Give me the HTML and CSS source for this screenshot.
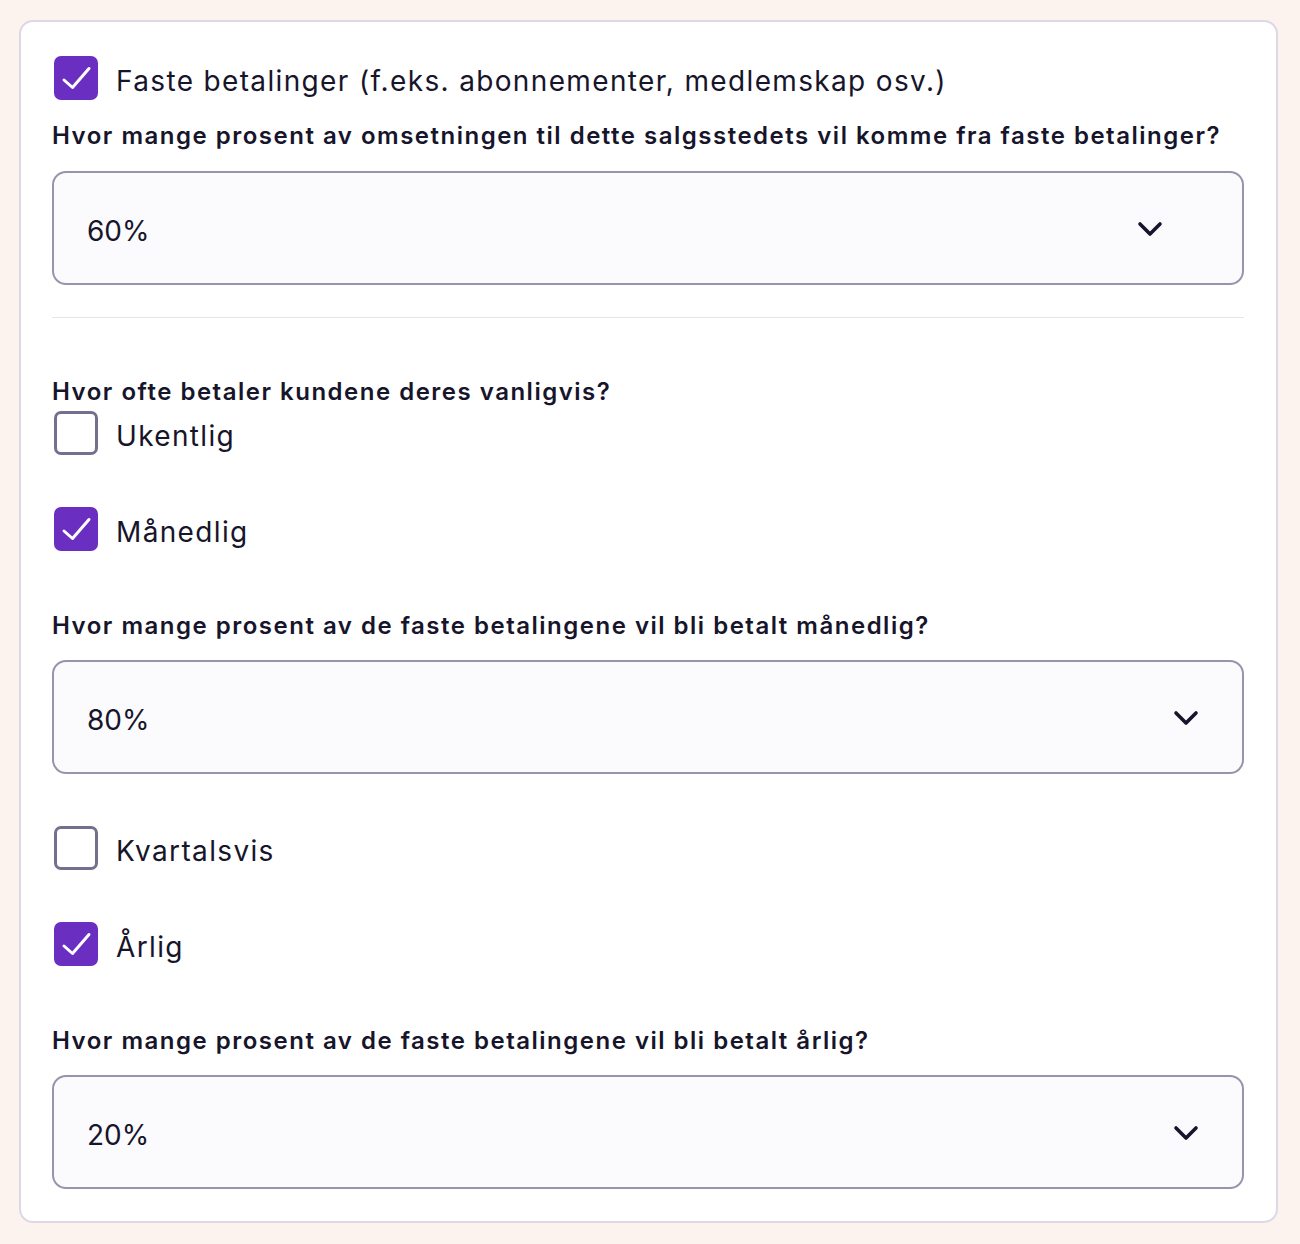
FILE: index.html
```html
<!DOCTYPE html>
<html lang="no">
<head>
<meta charset="utf-8">
<link rel="stylesheet" href="styles.css">
</head>
<body>
<div class="card">
  <label class="check-row">
    <span class="box checked"><svg viewBox="0 0 44 44" width="44" height="44"><path d="M10 24l8.5 7.5L35 12.5" fill="none" stroke="#fff" stroke-width="3" stroke-linecap="round" stroke-linejoin="round"/></svg></span>
    <span class="check-label">Faste betalinger (f.eks. abonnementer, medlemskap osv.)</span>
  </label>
  <div class="question q1">Hvor mange prosent av omsetningen til dette salgsstedets vil komme fra faste betalinger?</div>
  <div class="select s1"><span class="value">60%</span><svg class="chev" viewBox="0 0 28 28" width="28" height="28"><path d="M4 9l10 10 10-10" fill="none" stroke="#17152b" stroke-width="3.6" stroke-linecap="round" stroke-linejoin="round"/></svg></div>
  <hr class="divider">
  <div class="question q2">Hvor ofte betaler kundene deres vanligvis?</div>
  <label class="check-row r-first">
    <span class="box"></span>
    <span class="check-label">Ukentlig</span>
  </label>
  <label class="check-row r-next">
    <span class="box checked"><svg viewBox="0 0 44 44" width="44" height="44"><path d="M10 24l8.5 7.5L35 12.5" fill="none" stroke="#fff" stroke-width="3" stroke-linecap="round" stroke-linejoin="round"/></svg></span>
    <span class="check-label">Månedlig</span>
  </label>
  <div class="question q3">Hvor mange prosent av de faste betalingene vil bli betalt månedlig?</div>
  <div class="select"><span class="value">80%</span><svg class="chev" viewBox="0 0 28 28" width="28" height="28"><path d="M4 9l10 10 10-10" fill="none" stroke="#17152b" stroke-width="3.6" stroke-linecap="round" stroke-linejoin="round"/></svg></div>
  <label class="check-row r-next">
    <span class="box"></span>
    <span class="check-label">Kvartalsvis</span>
  </label>
  <label class="check-row r-next">
    <span class="box checked"><svg viewBox="0 0 44 44" width="44" height="44"><path d="M10 24l8.5 7.5L35 12.5" fill="none" stroke="#fff" stroke-width="3" stroke-linecap="round" stroke-linejoin="round"/></svg></span>
    <span class="check-label">Årlig</span>
  </label>
  <div class="question q3">Hvor mange prosent av de faste betalingene vil bli betalt årlig?</div>
  <div class="select"><span class="value">20%</span><svg class="chev" viewBox="0 0 28 28" width="28" height="28"><path d="M4 9l10 10 10-10" fill="none" stroke="#17152b" stroke-width="3.6" stroke-linecap="round" stroke-linejoin="round"/></svg></div>
</div>
</body>
</html>
```
FILE: styles.css
```css
html, body {
  margin: 0;
  padding: 0;
  background: #fdf3ee;
}
body {
  padding: 20px 22px 0 19px;
  font-family: Inter, "Noto Sans", sans-serif;
  color: #17152b;
}
.card {
  box-sizing: border-box;
  width: 1259px;
  height: 1203px;
  background: #ffffff;
  border: 2px solid #dcd8e8;
  border-radius: 14px;
  padding: 34px 32px 32px 31px;
  display: flex;
  flex-direction: column;
}
.check-row {
  display: flex;
  align-items: center;
  gap: 18px;
  height: 44px;
  padding-left: 2px;
}
.box {
  box-sizing: border-box;
  width: 44px;
  height: 44px;
  border: 3px solid #756e8e;
  border-radius: 7px;
  display: flex;
  align-items: center;
  justify-content: center;
  flex: none;
  overflow: hidden;
}
.box.checked {
  background: #6a2fc0;
  border: 0;
}
.check-label {
  font-size: 28px;
  line-height: 36px;
  letter-spacing: 1.35px;
  padding-top: 6px;
}
.question {
  font-size: 24px;
  line-height: 32px;
  font-weight: 600;
  letter-spacing: 1.5px;
}
.q1 { margin-top: 20px; }
.q2 { margin-top: 58px; }
.q3 { margin-top: 59px; }
.r-first { margin-top: 3px; }
.r-next { margin-top: 52px; }
.q1 + .select { margin-top: 19px; }
.select {
  box-sizing: border-box;
  margin-top: 18px;
  height: 115px;
  border: 2px solid #9994ab;
  border-radius: 14px;
  background: #fbfbfe;
  display: flex;
  align-items: center;
  justify-content: space-between;
  padding: 0 42px 0 33px;
}
.select.s1 { padding-right: 78px; }
.value {
  font-size: 28px;
  line-height: 36px;
  letter-spacing: 0;
  padding-top: 6px;
}
.chev { flex: none; margin-top: 2px; }
.divider {
  margin: 32px 0 0 0;
  border: 0;
  height: 1px;
  background: #e6e5e8;
}
```
